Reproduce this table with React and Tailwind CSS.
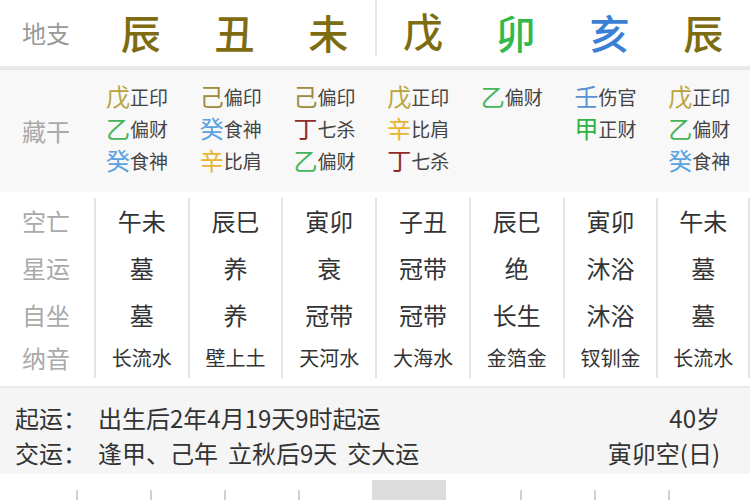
import React from "react";

const FONT = { fontFamily: '"Noto Sans CJK SC", "Noto Sans", sans-serif' };

const top = [
  { c: "辰", cls: "text-[#7d6c12]" },
  { c: "丑", cls: "text-[#7d6c12]" },
  { c: "未", cls: "text-[#7d6c12]" },
  { c: "戊", cls: "text-[#7d6c12]" },
  { c: "卯", cls: "text-[#33b84a]" },
  { c: "亥", cls: "text-[#3b7fd4]" },
  { c: "辰", cls: "text-[#7d6c12]" },
];

const stemColor = {
  戊: "text-[#b9a43c]",
  己: "text-[#9c8c3a]",
  乙: "text-[#45b45a]",
  癸: "text-[#5aa2e2]",
  辛: "text-[#e6b532]",
  丁: "text-[#8e2b2b]",
  壬: "text-[#5a92d4]",
  甲: "text-[#2eb344]",
};

const hidden = [
  [["戊", "正印"], ["乙", "偏财"], ["癸", "食神"]],
  [["己", "偏印"], ["癸", "食神"], ["辛", "比肩"]],
  [["己", "偏印"], ["丁", "七杀"], ["乙", "偏财"]],
  [["戊", "正印"], ["辛", "比肩"], ["丁", "七杀"]],
  [["乙", "偏财"]],
  [["壬", "伤官"], ["甲", "正财"]],
  [["戊", "正印"], ["乙", "偏财"], ["癸", "食神"]],
];

const kong = ["午未", "辰巳", "寅卯", "子丑", "辰巳", "寅卯", "午未"];
const xing = ["墓", "养", "衰", "冠带", "绝", "沐浴", "墓"];
const zizuo = ["墓", "养", "冠带", "冠带", "长生", "沐浴", "墓"];
const nayin = ["长流水", "壁上土", "天河水", "大海水", "金箔金", "钗钏金", "长流水"];

export default function App() {
  return (
    <div className="w-[750px] h-[500px] overflow-hidden bg-white text-[#333]" style={FONT}>
      {/* 地支 */}
      <div className="grid grid-cols-[94px_repeat(7,1fr)] h-[66px] items-center">
        <div className="pl-[22px] text-[24px] text-[#999]">地支</div>
        {top.map((t, i) => (
          <div
            key={i}
            className={`flex items-center justify-center text-[40px] font-medium leading-none ${t.cls} ${
              i === 3 ? "self-start h-[56px] pt-[6px] border-l-2 border-[#e6e6e6]" : "h-full"
            }`}
          >
            <span className="-mt-[2px]">{t.c}</span>
          </div>
        ))}
      </div>
      <div className="h-[4px] bg-[#e9e9e9]" />

      {/* 藏干 */}
      <div className="grid grid-cols-[94px_repeat(7,1fr)] h-[122px] bg-[#f8f8f8] pt-[10px]">
        <div className="flex items-center pl-[22px] text-[24px] text-[#aaa] pb-[10px]">藏干</div>
        {hidden.map((col, i) => (
          <div key={i} className="flex flex-col pl-[12px]">
            {col.map(([s, g], j) => (
              <div key={j} className="flex h-[32px] items-center">
                <span className={`text-[24px] leading-none ${stemColor[s]}`}>{s}</span>
                <span className="text-[19px] leading-none text-[#444]">{g}</span>
              </div>
            ))}
          </div>
        ))}
      </div>

      {/* 空亡 etc */}
      <div className="grid grid-cols-[94px_repeat(7,1fr)] pt-[6px] pb-[5px]">
        <div className="flex flex-col pl-[22px] text-[24px] text-[#aaa]">
          <div className="flex h-[46px] items-center">空亡</div>
          <div className="flex h-[48px] items-center">星运</div>
          <div className="flex h-[46px] items-center">自坐</div>
          <div className="flex h-[40px] items-center">纳音</div>
        </div>
        {kong.map((k, i) => (
          <div
            key={i}
            className={`flex flex-col items-center border-l-2 border-[#e4e4e4] ${i === 6 ? "border-r-2" : ""}`}
          >
            <div className="flex h-[46px] items-center text-[24px]">{k}</div>
            <div className="flex h-[48px] items-center text-[24px]">{xing[i]}</div>
            <div className="flex h-[46px] items-center text-[24px]">{zizuo[i]}</div>
            <div className="flex h-[40px] items-center text-[20px]">{nayin[i]}</div>
          </div>
        ))}
      </div>

      {/* 起运 */}
      <div className="mt-[3px] h-[88px] bg-[#f5f5f5] pl-[15px] pr-[30px] pt-[12px] text-[24px] text-[#333] border-t-2 border-[#ececec]">
        <div className="flex h-[35px] items-center">
          <span className="w-[83px]">起运：</span>
          <span className="flex-1">出生后2年4月19天9时起运</span>
          <span>40岁</span>
        </div>
        <div className="flex h-[35px] items-center">
          <span className="w-[83px]">交运：</span>
          <span className="flex-1">
            <span>逢甲、己年</span>
            <span className="ml-[10px]">立秋后9天</span>
            <span className="ml-[10px]">交大运</span>
          </span>
          <span>寅卯空(日)</span>
        </div>
      </div>

      {/* bottom tabs */}
      <div className="mt-[6px] flex h-[20px] items-end">
        <div className="w-[76px] h-full" />
        {Array.from({ length: 9 }).map((_, i) => (
          <div key={i} className={`h-full w-[74px] ${i === 4 ? "bg-[#dcdcdc]" : ""}`}>
            {i !== 4 && i !== 5 ? (
              <div className="mt-[10px] h-[10px] border-l-2 border-[#d0d0d0]" />
            ) : null}
          </div>
        ))}
      </div>
    </div>
  );
}
